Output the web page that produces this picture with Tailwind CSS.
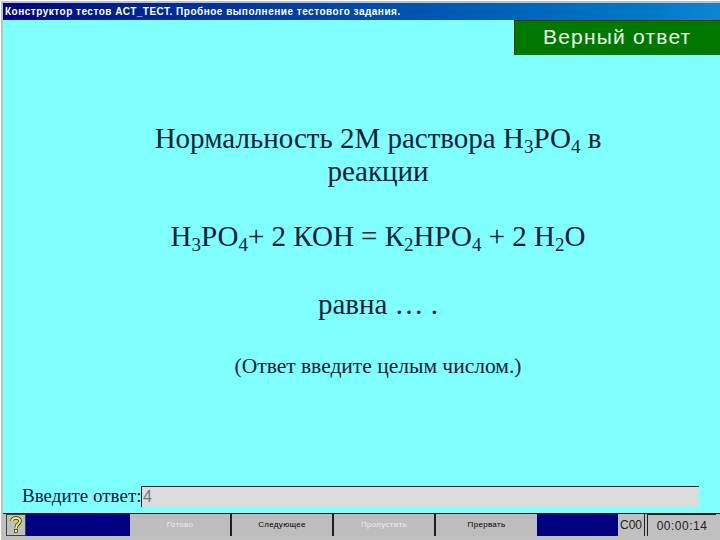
<!DOCTYPE html>
<html lang="ru">
<head>
  <meta charset="UTF-8" />
  <title>Конструктор тестов</title>
  <script src="https://cdn.jsdelivr.net/npm/@tailwindcss/browser@4"></script>
</head>
<body class="w-[720px] h-[540px] overflow-hidden bg-[#c0c0c0]">
  <div class="h-[540px] flex flex-col pt-[2px] pl-[2px] pb-[4px] border-t border-l border-white">
    <!-- Title bar -->
    <div class="h-[17px] shrink-0 flex items-center pl-[2px] bg-gradient-to-r from-[#000080] to-[#1084d0] text-white text-[10px] font-bold font-['Liberation_Sans',sans-serif] tracking-[0.5px] whitespace-nowrap">
      Конструктор тестов АСТ_ТЕСТ. Пробное выполнение тестового задания.
    </div>

    <!-- Main area -->
    <div class="flex-1 flex flex-col bg-[#80ffff] text-[#02203a] font-['Liberation_Serif',serif]">
      <div class="flex justify-end">
        <div class="w-[206px] h-[35px] flex items-center pl-[28px] pb-[3px] bg-[#007800] border-l border-t border-[#003a00] text-[#e8ffe8] text-[21px] font-['Liberation_Sans',sans-serif] tracking-[1.2px] whitespace-nowrap">Верный ответ</div>
      </div>

      <div class="w-[500px] ml-[125px] mt-[67px] text-center text-[29px] leading-[33px]">
        <p>Нормальность 2М раствора Н<sub class="text-[19px] leading-none">3</sub>РО<sub class="text-[19px] leading-none">4</sub> в реакции</p>
        <p class="mt-[32px]">Н<sub class="text-[19px] leading-none">3</sub>РО<sub class="text-[19px] leading-none">4</sub>+ 2 КОН = К<sub class="text-[19px] leading-none">2</sub>НРО<sub class="text-[19px] leading-none">4</sub> + 2 Н<sub class="text-[19px] leading-none">2</sub>О</p>
        <p class="mt-[35px]">равна … .</p>
        <p class="mt-[33px] text-[21.5px] leading-[24px]">(Ответ введите целым числом.)</p>
      </div>

      <div class="mt-auto mb-[5px] flex items-center pl-[19px]">
        <span class="w-[119px] pb-[2px] text-[19px] leading-[21px] whitespace-nowrap">Введите ответ:</span>
        <div class="w-[558px] h-[21px] pl-[1px] bg-[#dcdcdc] border-t border-l border-[#202020] text-[#777] text-[16px] leading-[20px] font-['Liberation_Sans',sans-serif]">4</div>
      </div>
    </div>

    <!-- Bottom bar -->
    <div class="h-[23px] shrink-0 flex border-t border-[#202020] text-[8px] font-['Liberation_Sans',sans-serif] tracking-[0.3px] whitespace-nowrap">
      <div class="w-[3px] bg-[#c0c0c0]"></div>
      <div class="w-[20px] flex items-center justify-center bg-[#c0c0c0] border border-[#404040]">
        <svg width="14" height="18" viewBox="0 0 14 18">
          <path d="M3 5 Q3 2 7 2 Q11 2 11 5 Q11 7 8 9 L7 12" fill="none" stroke="#303000" stroke-width="3.4"/>
          <path d="M3 5 Q3 2 7 2 Q11 2 11 5 Q11 7 8 9 L7 12" fill="none" stroke="#f4f060" stroke-width="2"/>
          <rect x="5.5" y="13.5" width="3" height="3" fill="#f4f060" stroke="#303000" stroke-width="0.7"/>
        </svg>
      </div>
      <div class="w-[104px] bg-[#000080]"></div>
      <div class="w-[102px] flex items-center justify-center bg-[#bdbdbd] border-r-2 border-[#202020] text-[#eeeeee]">Готово</div>
      <div class="w-[102px] flex items-center justify-center bg-[#bdbdbd] border-r-2 border-[#202020] text-black">Следующее</div>
      <div class="w-[102px] flex items-center justify-center bg-[#bdbdbd] border-r-2 border-[#202020] text-[#eeeeee]">Пропустить</div>
      <div class="w-[101px] flex items-center justify-center bg-[#bdbdbd] text-black">Прервать</div>
      <div class="w-[81px] bg-[#000080]"></div>
      <div class="w-[27px] flex items-center justify-center bg-[#c0c0c0] border-r border-[#202020] text-[#202020] text-[12px] tracking-normal">С00</div>
      <div class="w-[2px] bg-[#c0c0c0]"></div>
      <div class="w-[69px] flex items-center justify-center bg-[#c0c0c0] border-l border-t border-[#202020] text-[#202020] text-[12px] tracking-[0.5px]">00:00:14</div>
    </div>
  </div>
</body>
</html>
